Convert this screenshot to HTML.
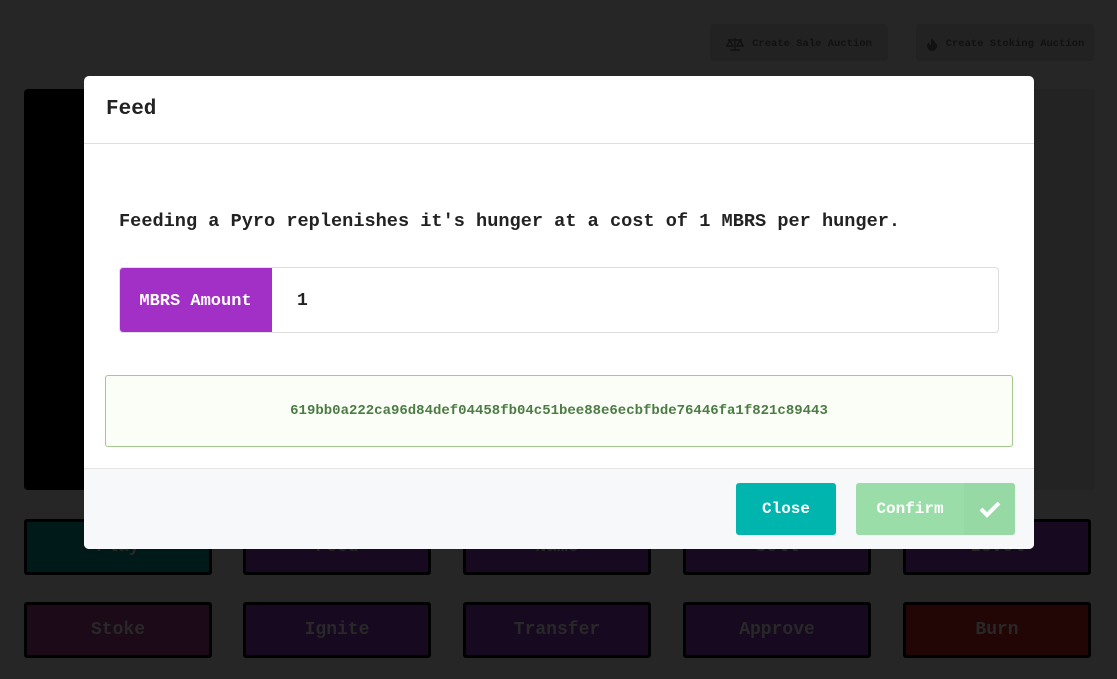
<!DOCTYPE html>
<html><head><style>
*{box-sizing:border-box;margin:0;padding:0}
body{width:1117px;height:679px;background:#262626;position:relative;overflow:hidden;font-family:"Liberation Mono",monospace;font-weight:bold}
.top{position:absolute;top:24px;height:37px;background:#222;border-radius:4px;color:#111;font-size:10.5px;display:flex;align-items:center;justify-content:center;gap:8px;padding-top:2px}
.panel{position:absolute;left:24px;top:89px;width:1071px;height:401px;background:#232323;border-radius:4px}
.black{position:absolute;left:24px;top:89px;width:80px;height:401px;background:#000;border-radius:4px 0 0 4px}
.b{position:absolute;width:188px;height:56px;border:3px solid #000;border-radius:3px;color:#282828;font-size:18px;display:flex;align-items:center;justify-content:center}
.modal{position:absolute;left:84px;top:76px;width:950px;height:473px;background:#fff;border-radius:5px;overflow:hidden}
.hd{height:68px;border-bottom:1px solid #dedede;padding:22px 22px;font-size:21px;color:#222}
.ft{position:absolute;left:0;right:0;bottom:0;height:81px;background:#f7f8fa;border-top:1px solid #e5e5e5}
</style></head><body>
<div class="top" style="left:710px;width:178px"><svg width="18" height="14" viewBox="0 0 18 14"><path d="M9 1v12M4 13h10M2 3h14M4 3l-3 6h6zM14 3l-3 6h6z" stroke="#111" stroke-width="1.4" fill="none"/></svg>Create Sale Auction</div>
<div class="top" style="left:916px;width:178px"><svg width="12" height="14" viewBox="0 0 12 14"><path d="M6 1C7 4 11 6 11 9a5 5 0 0 1-10 0c0-2 1-3 2-4 0 2 1 3 2 3C5 6 5 3 6 1z" fill="#111"/></svg>Create Stoking Auction</div>
<div class="panel"></div><div class="black"></div>
<div class="b" style="left:24px;top:519px;background:#001a1a">Play</div>
<div class="b" style="left:243px;top:519px;background:#170a20">Feed</div>
<div class="b" style="left:463px;top:519px;background:#170a20">Name</div>
<div class="b" style="left:683px;top:519px;background:#170a20">Sell</div>
<div class="b" style="left:903px;top:519px;background:#170a20">Level</div>
<div class="b" style="left:24px;top:602px;background:#1d0a18">Stoke</div>
<div class="b" style="left:243px;top:602px;background:#170a20">Ignite</div>
<div class="b" style="left:463px;top:602px;background:#170a20">Transfer</div>
<div class="b" style="left:683px;top:602px;background:#170a20">Approve</div>
<div class="b" style="left:903px;top:602px;background:#220505">Burn</div>
<div class="modal">
<div class="hd">Feed</div>
<div style="position:absolute;left:35px;top:135px;font-size:18.6px;color:#222;white-space:nowrap">Feeding a Pyro replenishes it's hunger at a cost of 1 MBRS per hunger.</div>
<div style="position:absolute;left:35px;top:191px;width:880px;height:66px;border:1px solid #dedede;border-radius:4px;overflow:hidden">
<div style="position:absolute;left:-1px;top:-1px;width:153px;height:66px;background:#a22fc6;color:#fff;font-size:17px;display:flex;align-items:center;justify-content:center;padding-top:2px">MBRS Amount</div>
<div style="position:absolute;left:177px;top:23px;font-size:18px;color:#222">1</div>
</div>
<div style="position:absolute;left:21px;top:299px;width:908px;height:72px;border:1px solid #a3c98e;border-radius:3px;background:#fbfef6;color:#4c7c45;font-size:14px;display:flex;align-items:center;justify-content:center">619bb0a222ca96d84def04458fb04c51bee88e6ecbfbde76446fa1f821c89443</div>
<div class="ft">
<div style="position:absolute;left:652px;top:14px;width:100px;height:52px;background:#00b5ad;border-radius:3px;color:#fff;font-size:16px;display:flex;align-items:center;justify-content:center">Close</div>
<div style="position:absolute;left:772px;top:14px;width:159px;height:52px;background:#9bdda9;border-radius:3px;color:#fff;font-size:16px;overflow:hidden">
<div style="position:absolute;left:0;top:0;width:108px;height:52px;display:flex;align-items:center;justify-content:center">Confirm</div>
<div style="position:absolute;right:0;top:0;width:51px;height:52px;background:#97d9a5;display:flex;align-items:center;justify-content:center"><svg width="22" height="18" viewBox="0 0 22 18"><path d="M2 9l6 6L20 3" stroke="#fff" stroke-width="4" fill="none"/></svg></div>
</div>
</div>
</div>
</body></html>
